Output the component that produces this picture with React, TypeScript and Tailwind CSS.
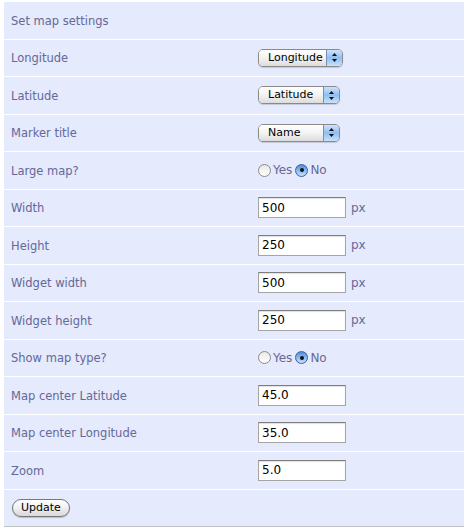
import React from "react";

const FONT = { fontFamily: '"DejaVu Sans", "Lucida Grande", Verdana, sans-serif' };

function PopUp({ value, width }: { value: string; width: string }) {
  return (
    <div
      className={`flex h-[18px] ${width} items-stretch overflow-hidden rounded-[5px] border border-[#8a8a8a] shadow-[0_1px_1px_rgba(0,0,0,0.15)]`}
    >
      <div className="flex flex-1 items-center bg-gradient-to-b from-white via-[#f3f3f3] to-[#dcdcdc] pl-[9px] text-[11px] text-black">
        {value}
      </div>
      <div className="flex w-[16px] flex-col items-center justify-center border-l border-[#7a8fb5] bg-gradient-to-b from-[#cfe3fb] via-[#8fbdf0] to-[#c9e2fb]">
        <svg width="7" height="11" viewBox="0 0 7 11">
          <path d="M3.5 1 L6 4 L1 4 Z" fill="#111" />
          <path d="M3.5 10 L6 7 L1 7 Z" fill="#111" />
        </svg>
      </div>
    </div>
  );
}

function Radio({ checked }: { checked: boolean }) {
  return checked ? (
    <span className="flex h-[13px] w-[13px] items-center justify-center rounded-full border border-[#3d5f97] bg-gradient-to-b from-[#4f8be0] via-[#8ab9f0] to-[#c6e0fb]">
      <span className="h-[4px] w-[4px] rounded-full bg-[#111]" />
    </span>
  ) : (
    <span className="h-[13px] w-[13px] rounded-full border border-[#8a8a8a] bg-gradient-to-b from-[#e8e8e8] to-white" />
  );
}

function YesNo() {
  return (
    <div className="flex items-center text-[12px] text-[#64689a]">
      <Radio checked={false} />
      <span className="ml-[2px] mr-[3px]">Yes</span>
      <Radio checked />
      <span className="ml-[2px]">No</span>
    </div>
  );
}

function TextBox({ value, unit }: { value: string; unit?: boolean }) {
  return (
    <div className="flex items-center">
      <div className="flex h-[21px] w-[88px] items-center border border-[#a5a5a5] border-t-[#7d7d7d] bg-white pl-[3px] text-[12px] text-black shadow-[inset_0_1px_1px_rgba(0,0,0,0.12)]">
        {value}
      </div>
      {unit && <span className="ml-[5px] text-[12px] text-[#64689a]">px</span>}
    </div>
  );
}

const rows: { label: string; control: React.ReactNode }[] = [
  { label: "Longitude", control: <PopUp value="Longitude" width="w-[85px]" /> },
  { label: "Latitude", control: <PopUp value="Latitude" width="w-[82px]" /> },
  { label: "Marker title", control: <PopUp value="Name" width="w-[82px]" /> },
  { label: "Large map?", control: <YesNo /> },
  { label: "Width", control: <TextBox value="500" unit /> },
  { label: "Height", control: <TextBox value="250" unit /> },
  { label: "Widget width", control: <TextBox value="500" unit /> },
  { label: "Widget height", control: <TextBox value="250" unit /> },
  { label: "Show map type?", control: <YesNo /> },
  { label: "Map center Latitude", control: <TextBox value="45.0" /> },
  { label: "Map center Longitude", control: <TextBox value="35.0" /> },
  { label: "Zoom", control: <TextBox value="5.0" /> },
];

export default function App() {
  return (
    <div className="h-[531px] w-[468px] bg-white px-[4px] pt-[2px]" style={FONT}>
      <div className="border-b border-[#c2c2c4] bg-[#e5eafc]">
        <div className="flex h-[37.5px] items-center border-b border-white pl-[7px] pt-[2px] text-[11.5px] text-[#64689a]">
          Set map settings
        </div>
        {rows.map((r) => (
          <div
            key={r.label}
            className="grid h-[37.5px] grid-cols-[254px_1fr] items-center border-b border-white"
          >
            <span className="pl-[7px] pt-[2px] text-[11.5px] text-[#64689a]">{r.label}</span>
            {r.control}
          </div>
        ))}
        <div className="flex h-[36.5px] items-center pl-[8px]">
          <button
            type="button"
            className="flex h-[18px] items-center rounded-full border border-[#777] bg-gradient-to-b from-white via-[#f0f0f0] to-[#d8d8d8] px-[8px] text-[11px] text-black shadow-[0_1px_1px_rgba(0,0,0,0.2)]"
          >
            Update
          </button>
        </div>
      </div>
    </div>
  );
}
